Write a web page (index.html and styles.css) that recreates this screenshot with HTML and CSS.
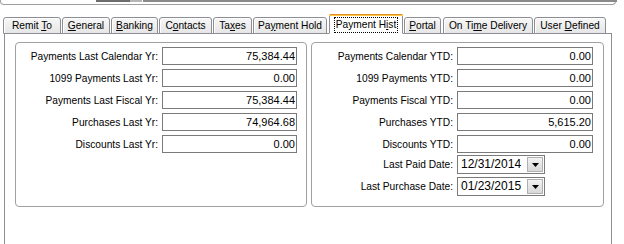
FILE: index.html
```html
<!DOCTYPE html>
<html>
<head>
<meta charset="utf-8">
<link rel="stylesheet" href="styles.css">
</head>
<body>
<div class="top">
  <div class="topgroup">
    <div class="tf tf1"></div>
    <div class="tf tf2"></div>
    <div class="tf tf3"></div>
  </div>
</div>
<div class="tabs">
  <div class="tab t1">Remit <u>T</u>o</div>
  <div class="tab t2"><u>G</u>eneral</div>
  <div class="tab t3"><u>B</u>anking</div>
  <div class="tab t4">C<u>o</u>ntacts</div>
  <div class="tab t5">Ta<u>x</u>es</div>
  <div class="tab t6">Pa<u>y</u>ment Hold</div>
  <div class="tab active t7"><span class="focus">Payment H<u>i</u>st</span></div>
  <div class="tab t8"><u>P</u>ortal</div>
  <div class="tab t9">On Ti<u>m</u>e Delivery</div>
  <div class="tab t10">User <u>D</u>efined</div>
</div>
<div class="panel">
  <div class="group gleft">
    <div class="row"><label>Payments Last Calendar Yr:</label><div class="field">75,384.44</div></div>
    <div class="row"><label>1099 Payments Last Yr:</label><div class="field">0.00</div></div>
    <div class="row"><label>Payments Last Fiscal Yr:</label><div class="field">75,384.44</div></div>
    <div class="row"><label>Purchases Last Yr:</label><div class="field">74,964.68</div></div>
    <div class="row"><label>Discounts Last Yr:</label><div class="field">0.00</div></div>
  </div>
  <div class="group gright">
    <div class="row"><label>Payments Calendar YTD:</label><div class="field">0.00</div></div>
    <div class="row"><label>1099 Payments YTD:</label><div class="field">0.00</div></div>
    <div class="row"><label>Payments Fiscal YTD:</label><div class="field">0.00</div></div>
    <div class="row"><label>Purchases YTD:</label><div class="field">5,615.20</div></div>
    <div class="row"><label>Discounts YTD:</label><div class="field">0.00</div></div>
    <div class="row drow d1"><label>Last Paid Date:</label><div class="date"><span class="dtext">12/31/2014</span><span class="dd"><svg width="7" height="4" viewBox="0 0 7 4"><path d="M0 0H7L3.5 4Z" fill="#000"/></svg></span></div></div>
    <div class="row drow d2"><label>Last Purchase Date:</label><div class="date"><span class="dtext">01/23/2015</span><span class="dd"><svg width="7" height="4" viewBox="0 0 7 4"><path d="M0 0H7L3.5 4Z" fill="#000"/></svg></span></div></div>
  </div>
</div>
</body>
</html>
```
FILE: styles.css
```css
* { box-sizing: border-box; }
html, body {
  margin: 0;
  padding: 0;
  background: #fff;
  width: 624px;
  height: 244px;
  overflow: hidden;
  font-family: "Liberation Sans", Arial, sans-serif;
  font-size: 10.2px;
  color: #000;
}
.top {
  height: 14px;
}
.topgroup {
  position: relative;
  width: 616px;
  height: 5px;
  border: 1px solid #a0a0a0;
  border-top: none;
  border-radius: 0 0 4px 4px;
}
.tf {
  position: absolute;
  top: 0;
  height: 2px;
}
.tf1 { left: 95px; width: 34px; background: #6d6d6d; }
.tf2 { left: 129px; width: 12px; background: #b5b5b5; }
.tf3 { left: 142px; width: 474px; background: #8a8a8a; }

.tabs {
  display: flex;
  align-items: flex-end;
  height: 20px;
  padding-left: 3px;
  position: relative;
  z-index: 1;
}
.tab {
  height: 17px;
  margin-right: 1px;
  border: 1px solid #8c8e94;
  border-radius: 3px 3px 0 0;
  background: linear-gradient(#f7f7f7, #e6e6e6);
  box-shadow: inset 1px 1px 0 #fff;
  line-height: 15px;
  text-align: center;
  white-space: nowrap;
}
.t1 { width: 58px; }
.t2 { width: 48px; }
.t3 { width: 47px; }
.t4 { width: 53px; }
.t5 { width: 39px; }
.t6 { width: 74px; }
.t7 { width: 74px; }
.t8 { width: 37px; }
.t9 { width: 90px; }
.t10 { width: 72px; }
.tab.active {
  height: 20px;
  margin-left: 1px;
  margin-right: 1px;
  padding-top: 1px;
  border-top: none;
  border-bottom: 1px solid #fff;
  background: #fff;
  box-shadow: none;
  position: relative;
}
.tab.active::before {
  content: "";
  position: absolute;
  left: -1px;
  right: -1px;
  top: 0;
  height: 2px;
  border-radius: 2px 2px 0 0;
  background: linear-gradient(#e68b2c 50%, #ffc73c 50%);
}
.t8 { margin-right: 2px; }
.focus {
  display: inline-block;
  margin-top: 2px;
  padding: 0 1px;
  border: 1px dotted #000;
  line-height: 14px;
}
.panel {
  margin-top: -1px;
  margin-left: 4px;
  width: 608px;
  height: 211px;
  border: 1px solid #8c8e94;
  border-bottom: none;
  padding: 8px 0 0 10px;
  display: flex;
  align-items: flex-start;
  gap: 4px;
}
.group {
  height: 165px;
  border: 1px solid #a0a0a0;
  border-radius: 4px;
  padding-top: 4px;
  display: flex;
  flex-direction: column;
  gap: 4px;
}
.gleft { width: 292px; }
.gright { width: 293px; }
.row {
  display: flex;
  align-items: center;
  height: 18px;
}
.row label {
  text-align: right;
  padding-right: 4px;
  white-space: nowrap;
}
.gleft label { width: 146px; }
.gright label { width: 145px; }
.field {
  width: 135px;
  height: 18px;
  border: 1px solid #7a7a7a;
  text-align: right;
  padding-right: 1px;
  line-height: 16px;
  font-size: 11px;
}
.gright .field { width: 136px; }
.drow { height: 19px; }
.d1 { margin-top: -2px; }
.d2 { margin-top: -1px; }
.date {
  width: 88px;
  height: 19px;
  border: 1px solid #7a7a7a;
  display: flex;
  align-items: center;
  justify-content: space-between;
  padding: 1px;
}
.dtext {
  padding-left: 2px;
  font-size: 12px;
  line-height: 15px;
}
.dd {
  width: 16px;
  height: 15px;
  background: linear-gradient(#f2f2f2, #d8d8d8);
  border: 1px solid #b0b0b0;
  display: flex;
  align-items: center;
  justify-content: center;
}
```
